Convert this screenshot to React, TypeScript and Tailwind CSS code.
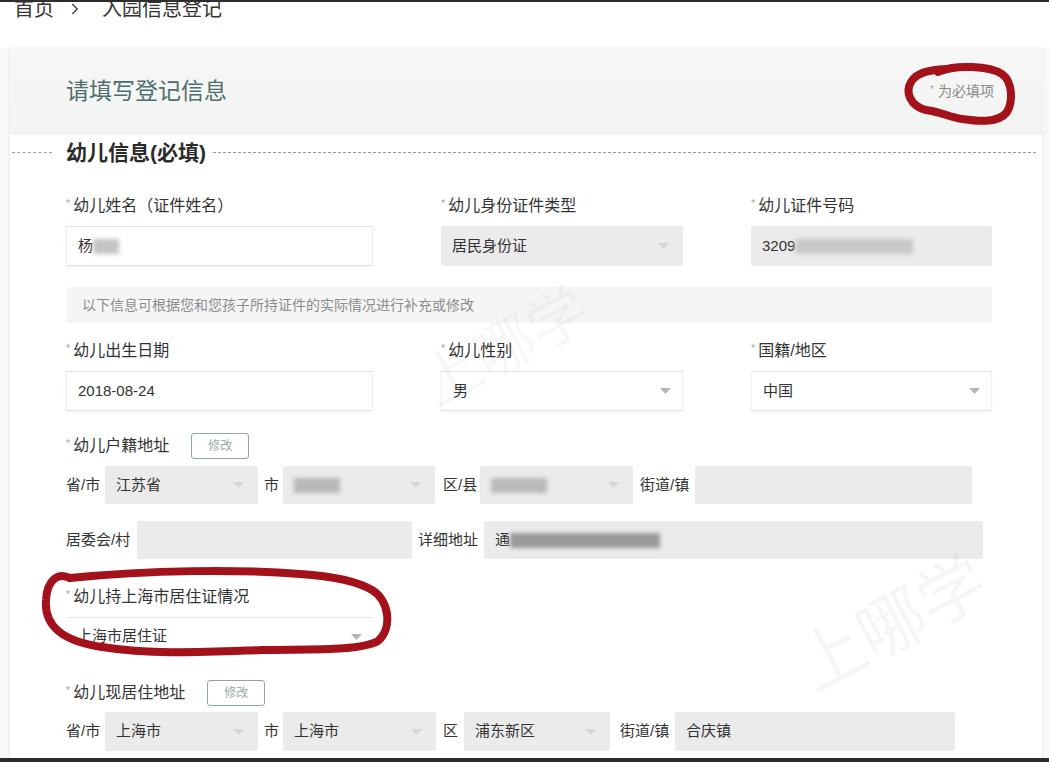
import { ChevronRight } from "lucide-react";
import type { ReactNode } from "react";

function Star() {
  return <span className="text-[11px] leading-[12px] text-[#aaa] mr-[3px] self-start mt-[3px]">*</span>;
}

function Label({ children }: { children: ReactNode }) {
  return (
    <div className="flex items-center h-[24px] text-[16px] leading-[24px] text-[#333]">
      <Star />
      {children}
    </div>
  );
}

function Caret({ faint }: { faint?: boolean }) {
  return (
    <svg width="11" height="6" viewBox="0 0 11 6" className="shrink-0">
      <polygon points="0,0 11,0 5.5,6" fill={faint ? "#d6d6d6" : "#b5b5b5"} />
    </svg>
  );
}

function Blur({ w, tone = "#bdbdbd" }: { w: string; tone?: string }) {
  return <span className={`inline-block h-[15px] blur-[2px] ${w}`} style={{ background: tone }} />;
}

function GreyBox({ w, children, caret }: { w: string; children?: ReactNode; caret?: boolean }) {
  return (
    <div className={`h-full bg-[#ebebeb] rounded-[2px] flex items-center justify-between pl-[11px] pr-[14px] text-[15px] text-[#333] ${w}`}>
      <div className="flex items-center">{children}</div>
      {caret && <Caret faint />}
    </div>
  );
}

function WhiteBox({ children, caret }: { children?: ReactNode; caret?: boolean }) {
  return (
    <div className="h-[40px] bg-white border-y border-x border-y-[#e2e2e2] border-x-[#f0f0f0] shadow-[0_1px_2px_rgba(0,0,0,0.04)] flex items-center justify-between pl-[11px] pr-[11px] text-[15px] text-[#333]">
      <div className="flex items-center">{children}</div>
      {caret && <Caret />}
    </div>
  );
}

function EditButton() {
  return (
    <button className="h-[26px] w-[58px] border border-[#8fa8a5] rounded-[3px] text-[12px] text-[#9aaaa8] bg-white">
      修改
    </button>
  );
}

export default function App() {
  return (
    <div className="relative w-[1049px] h-[762px] overflow-hidden bg-[#f8f8f8] font-['Liberation_Sans','Noto_Sans_CJK_SC',sans-serif]">
      <div className="h-[2px] bg-[#2b2b2b]" />

      {/* breadcrumb */}
      <div className="h-[46px] pl-[14px] flex items-start bg-white">
        <div className="-mt-[3px] flex items-center text-[20px] leading-[20px] text-[#333]">
          <span>首页</span>
          <ChevronRight className="w-[18px] h-[18px] ml-[12px] mr-[18px] text-[#444]" strokeWidth={2} />
          <span>入园信息登记</span>
        </div>
      </div>

      {/* card */}
      <div className="ml-[10px] w-[1032px] bg-white shadow-[0_0_4px_rgba(0,0,0,0.08)]">
        <div className="h-[87px] bg-gradient-to-b from-[#f7f7f7] to-[#f2f3f3] flex items-center justify-between pl-[56px] pr-[48px]">
          <h1 className="text-[23px] text-[#4d6f6b] font-normal">请填写登记信息</h1>
          <span className="text-[14px] text-[#8a8a8a] flex items-center">
            <span className="text-[10px] text-[#aaa] mr-[4px] -mt-[4px]">*</span>为必填项
          </span>
        </div>

        <div className="h-[35px] flex items-center">
          <div className="ml-[2px] w-[40px] border-t border-dashed border-[#9a9a9a]" />
          <span className="ml-[14px] text-[21px] font-bold text-[#2b2b2b]">幼儿信息(必填)</span>
          <div className="ml-[7px] mr-[6px] flex-1 border-t border-dashed border-[#9a9a9a]" />
        </div>

        <div className="pl-[56px] pb-[8px]">
          {/* row 1 */}
          <div className="grid grid-cols-[307px_242px_241px] gap-x-[68px] mt-[24px]">
            <Label>幼儿姓名（证件姓名）</Label>
            <Label>幼儿身份证件类型</Label>
            <Label>幼儿证件号码</Label>
          </div>
          <div className="grid grid-cols-[307px_242px_241px] gap-x-[68px] mt-[8px] h-[40px]">
            <WhiteBox>
              杨<Blur w="w-[26px]" tone="#c4c4c4" />
            </WhiteBox>
            <GreyBox w="w-full" caret>
              居民身份证
            </GreyBox>
            <GreyBox w="w-full">
              3209<Blur w="w-[118px]" tone="#c8c8c8" />
            </GreyBox>
          </div>

          <div className="mt-[21px] w-[926px] h-[36px] bg-[#f5f5f5] rounded-[3px] flex items-center pl-[16px] text-[14px] text-[#8c8c8c]">
            以下信息可根据您和您孩子所持证件的实际情况进行补充或修改
          </div>

          {/* row 2 */}
          <div className="grid grid-cols-[307px_242px_241px] gap-x-[68px] mt-[16px]">
            <Label>幼儿出生日期</Label>
            <Label>幼儿性别</Label>
            <Label>国籍/地区</Label>
          </div>
          <div className="grid grid-cols-[307px_242px_241px] gap-x-[68px] mt-[8px]">
            <WhiteBox>2018-08-24</WhiteBox>
            <WhiteBox caret>男</WhiteBox>
            <WhiteBox caret>中国</WhiteBox>
          </div>

          {/* row 3: registered address */}
          <div className="mt-[22px] h-[26px] flex items-center gap-[22px]">
            <Label>幼儿户籍地址</Label>
            <EditButton />
          </div>
          <div className="mt-[7px] h-[38px] flex items-center text-[15px] text-[#333]">
            <span className="w-[39px]">省/市</span>
            <GreyBox w="w-[153px]" caret>江苏省</GreyBox>
            <span className="w-[25px] pl-[6px]">市</span>
            <GreyBox w="w-[152px]" caret>
              <Blur w="w-[46px]" tone="#b8b8b8" />
            </GreyBox>
            <span className="w-[45px] pl-[8px]">区/县</span>
            <GreyBox w="w-[153px]" caret>
              <Blur w="w-[56px]" tone="#bababa" />
            </GreyBox>
            <span className="w-[62px] pl-[7px]">街道/镇</span>
            <GreyBox w="w-[277px]" />
          </div>
          <div className="mt-[17px] h-[38px] flex items-center text-[15px] text-[#333]">
            <span className="w-[71px]">居委会/村</span>
            <GreyBox w="w-[275px]" />
            <span className="w-[72px] pl-[6px]">详细地址</span>
            <GreyBox w="w-[499px]">
              通<Blur w="w-[150px]" tone="#9a9a9a" />
            </GreyBox>
          </div>

          {/* row 4 */}
          <div className="mt-[26px]">
            <Label>幼儿持上海市居住证情况</Label>
          </div>
          <div className="mt-[8px] w-[307px] h-[38px] border-t border-[#e8e8e8] flex items-center justify-between pl-[11px] pr-[11px] text-[15px] text-[#333]">
            上海市居住证
            <Caret />
          </div>

          {/* row 5 */}
          <div className="mt-[25px] h-[26px] flex items-center gap-[22px]">
            <Label>幼儿现居住地址</Label>
            <EditButton />
          </div>
          <div className="mt-[6px] h-[39px] flex items-center text-[15px] text-[#333]">
            <span className="w-[39px]">省/市</span>
            <GreyBox w="w-[153px]" caret>上海市</GreyBox>
            <span className="w-[25px] pl-[6px]">市</span>
            <GreyBox w="w-[153px]" caret>上海市</GreyBox>
            <span className="w-[28px] pl-[7px]">区</span>
            <GreyBox w="w-[146px]" caret>浦东新区</GreyBox>
            <span className="w-[65px] pl-[10px]">街道/镇</span>
            <GreyBox w="w-[280px]">合庆镇</GreyBox>
          </div>
        </div>
      </div>

      {/* watermarks */}
      <div className="absolute left-[415px] top-[318px] -rotate-[28deg] text-[60px] leading-[60px] text-black/[0.03] pointer-events-none">上哪学</div>
      <div className="absolute left-[790px] top-[590px] -rotate-[28deg] text-[68px] leading-[68px] text-black/[0.035] pointer-events-none">上哪学</div>

      {/* hand-drawn red marks */}
      <svg className="absolute inset-0 pointer-events-none" width="1049" height="762">
        <g fill="none" stroke="#a3121b" strokeWidth="8" strokeLinejoin="round" strokeLinecap="round">
          <path d="M 938 72 C 955 64, 990 66, 1002 74 C 1013 82, 1013 102, 1007 112 C 998 124, 976 121, 962 119 C 948 117, 942 112, 926 110 C 910 106, 905 92, 911 82 C 917 72, 930 70, 946 69" />
          <path d="M 70 578 C 58 572, 47 580, 46 600 C 44 626, 62 641, 102 647 C 152 655, 205 652, 262 650 C 312 649, 360 651, 378 641 C 393 628, 389 600, 372 590 C 355 580, 330 576, 300 574 C 240 569, 150 570, 70 578" />
        </g>
      </svg>

      <div className="absolute left-0 right-0 bottom-0 h-[4px] bg-[#2b2b2b]" />
    </div>
  );
}
